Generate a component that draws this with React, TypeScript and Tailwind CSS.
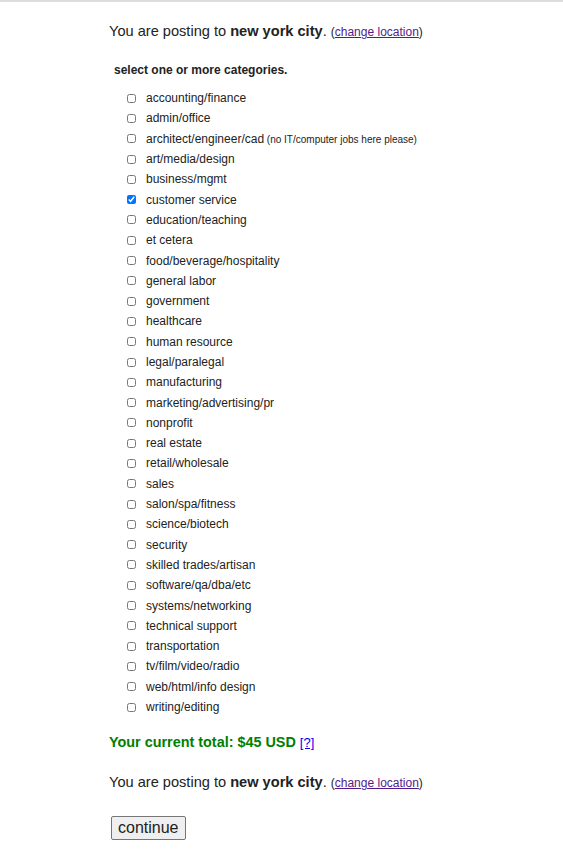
import React from "react";

const cats = [
  "accounting/finance",
  "admin/office",
  "architect/engineer/cad",
  "art/media/design",
  "business/mgmt",
  "customer service",
  "education/teaching",
  "et cetera",
  "food/beverage/hospitality",
  "general labor",
  "government",
  "healthcare",
  "human resource",
  "legal/paralegal",
  "manufacturing",
  "marketing/advertising/pr",
  "nonprofit",
  "real estate",
  "retail/wholesale",
  "sales",
  "salon/spa/fitness",
  "science/biotech",
  "security",
  "skilled trades/artisan",
  "software/qa/dba/etc",
  "systems/networking",
  "technical support",
  "transportation",
  "tv/film/video/radio",
  "web/html/info design",
  "writing/editing",
];

function Posting() {
  return (
    <p className="text-[14.6px] leading-[18px] text-[#222]">
      You are posting to <b>new york city</b>.{" "}
      <span className="text-[12px]">
        (<a href="#" className="text-[#551a8b] underline">change location</a>)
      </span>
    </p>
  );
}

export default function App() {
  return (
    <div
      className="min-h-[863px] bg-white border-t-2 border-[#ddd] text-[#222]"
      style={{ fontFamily: '"Liberation Sans", Arial, sans-serif' }}
    >
      <div className="pl-[109px] pt-[20px]">
        <Posting />
        <p className="mt-[22px] ml-[5px] text-[12px] leading-[14px] font-bold">
          select one or more categories.
        </p>
        <ul className="mt-[11px] ml-[18px]">
          {cats.map((c) => (
            <li key={c} className="flex items-center h-[20.3px] text-[12px]">
              <input
                type="checkbox"
                defaultChecked={c === "customer service"}
                className="w-[9px] h-[9px] m-0 accent-[#0075ff]"
              />
              <span className="ml-[10px]">
                {c}
                {c === "architect/engineer/cad" && (
                  <span className="text-[10px]"> (no IT/computer jobs here please)</span>
                )}
              </span>
            </li>
          ))}
        </ul>
        <p className="mt-[17px] text-[14.4px] leading-[16px] font-bold text-[#008000]">
          Your current total: $45 USD{" "}
          <a href="#" className="text-[13px] font-normal text-[#0000ee] underline">[?]</a>
        </p>
        <div className="mt-[22px]">
          <Posting />
        </div>
        <button className="mt-[24px] ml-[2px] px-[6px] py-0 h-[24px] leading-[22px] text-[16px] border border-[#767676] rounded-[2px] bg-[#efefef]">
          continue
        </button>
      </div>
    </div>
  );
}
